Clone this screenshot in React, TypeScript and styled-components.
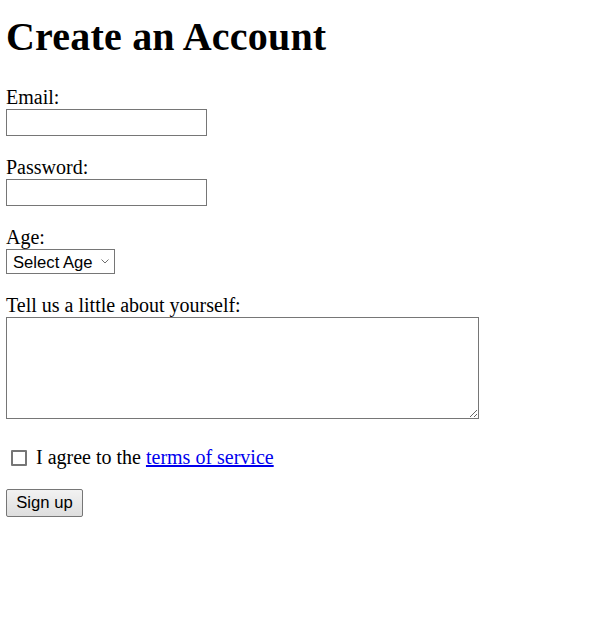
import React from "react";
import styled, { createGlobalStyle } from "styled-components";

const GlobalStyle = createGlobalStyle`
  html, body { margin: 0; padding: 0; background: #ffffff; }
  body { font-family: "Liberation Serif", "Times New Roman", serif; color: #000000; }
`;

const Page = styled.main`
  padding: 14px 6px 0 6px;
  display: flex;
  flex-direction: column;
  align-items: flex-start;
`;

const Title = styled.h1`
  margin: 0 0 26px 0;
  font-size: 40px;
  line-height: 46px;
  font-weight: bold;
  letter-spacing: 0.2px;
`;

const Form = styled.form`
  display: flex;
  flex-direction: column;
  align-items: flex-start;
`;

const Field = styled.div<{ $gap?: number }>`
  display: flex;
  flex-direction: column;
  align-items: flex-start;
  margin-bottom: ${(p) => p.$gap ?? 20}px;
`;

const Label = styled.label`
  display: block;
  font-size: 20px;
  line-height: 23px;
`;

const TextInput = styled.input`
  box-sizing: border-box;
  width: 201px;
  height: 27px;
  margin: 0;
  padding: 1px 3px;
  border: 1px solid #767676;
  border-radius: 0;
  font-family: "Liberation Sans", Arial, sans-serif;
  font-size: 16.67px;
  background: #ffffff;
  outline: none;
`;

const SelectWrap = styled.div`
  position: relative;
  width: 109px;
  height: 25px;
`;

const Select = styled.select`
  box-sizing: border-box;
  appearance: none;
  -webkit-appearance: none;
  width: 109px;
  height: 25px;
  margin: 0;
  padding: 1px 20px 0 6px;
  border: 1px solid #767676;
  border-radius: 0;
  background: #ffffff;
  color: #000000;
  font-family: "Liberation Sans", Arial, sans-serif;
  font-size: 16.67px;
  outline: none;
`;

const Chevron = styled.svg`
  position: absolute;
  right: 6px;
  top: 10px;
  width: 8px;
  height: 5px;
  pointer-events: none;
`;

const TextArea = styled.textarea`
  box-sizing: border-box;
  width: 473px;
  height: 102px;
  margin: 0;
  padding: 2px;
  border: 1px solid #767676;
  border-radius: 0;
  font-family: "Liberation Mono", monospace;
  font-size: 16.67px;
  outline: none;
`;

const AgreeRow = styled.label`
  display: flex;
  align-items: center;
  margin: 1px 0 20px 0;
  font-size: 20px;
  line-height: 23px;
  height: 23px;
`;

const Check = styled.input`
  appearance: none;
  -webkit-appearance: none;
  box-sizing: border-box;
  width: 16px;
  height: 16px;
  margin: 1px 9px 0 5px;
  border: 2px solid #767676;
  border-radius: 1px;
  background: #ffffff;
`;

const Link = styled.a`
  color: #0000ee;
  text-decoration: underline;
  margin-left: 5px;
`;

const Button = styled.button`
  box-sizing: border-box;
  width: 77px;
  height: 28px;
  margin: 0;
  padding: 0;
  border: 1px solid #767676;
  border-radius: 2px;
  background: linear-gradient(#f2f2f2, #dedede);
  color: #000000;
  font-family: "Liberation Sans", Arial, sans-serif;
  font-size: 16.67px;
`;

export default function App() {
  return (
    <>
      <GlobalStyle />
      <Page>
        <Title>Create an Account</Title>
        <Form onSubmit={(e) => e.preventDefault()}>
          <Field>
            <Label htmlFor="email">Email:</Label>
            <TextInput id="email" type="email" />
          </Field>
          <Field>
            <Label htmlFor="password">Password:</Label>
            <TextInput id="password" type="password" />
          </Field>
          <Field>
            <Label htmlFor="age">Age:</Label>
            <SelectWrap>
              <Select id="age" defaultValue="">
                <option value="">Select Age</option>
                <option value="18">18-24</option>
                <option value="25">25-34</option>
                <option value="35">35+</option>
              </Select>
              <Chevron viewBox="0 0 8 5">
                <path d="M0.5 0.5 L4 4 L7.5 0.5" fill="none" stroke="#6e6e6e" strokeWidth="1" />
              </Chevron>
            </SelectWrap>
          </Field>
          <Field $gap={26}>
            <Label htmlFor="about">Tell us a little about yourself:</Label>
            <TextArea id="about" />
          </Field>
          <AgreeRow>
            <Check type="checkbox" />
            I agree to the<Link href="#">terms of service</Link>
          </AgreeRow>
          <Button type="submit">Sign up</Button>
        </Form>
      </Page>
    </>
  );
}
